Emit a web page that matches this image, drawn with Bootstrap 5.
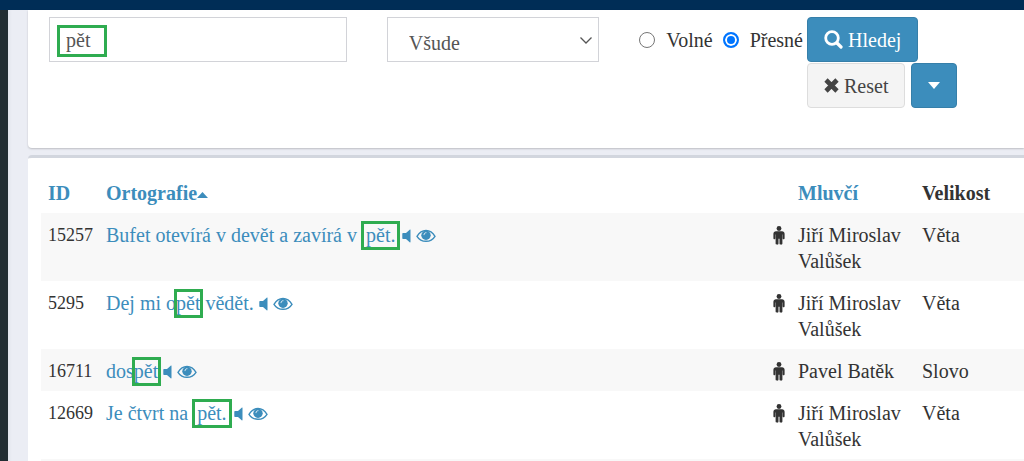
<!DOCTYPE html>
<html lang="cs">
<head>
<meta charset="utf-8">
<meta name="viewport" content="width=device-width, initial-scale=1">
<title>Hledání</title>
<link href="https://cdn.jsdelivr.net/npm/bootstrap@5.3.0/dist/css/bootstrap.min.css" rel="stylesheet">
<script src="https://cdn.jsdelivr.net/npm/bootstrap@5.3.0/dist/js/bootstrap.bundle.min.js" defer></script>
<style>
  :root { --blue: #3c8dbc; --green: #2fac50; }
  body { font: 20px/26px "Liberation Serif", serif; color: #333; background: #ebedf4; }
  .topbar { height: 10px; background: #002d56; }
  .rail { width: 8px; background: #222d32; }
  .shade { width: 20px; background: linear-gradient(90deg, #e2e5ec, #ebedf4 4px); }
  a { color: var(--blue); text-decoration: none; }
  svg { fill: currentColor; }
  .panel { background: #fff; }
  .search-panel { border-radius: 0 0 0 4px; box-shadow: 0 1px 2px rgba(0,0,0,.2); padding: 7px 64px 40px 21px; }
  .result-panel { margin-top: 7px; border-top: 3px solid #d2d6de; border-radius: 4px 0 0 0; padding: 15px 0 0 13px; }
  .search-grid { display: grid; grid-template-columns: 7fr 5fr auto; column-gap: 40px; align-items: start; }
  .form-control, .form-select { height: 45px; border: 1px solid #d2d3d8; border-radius: 0; color: #555; font-size: 20px; line-height: 26px; }
  .form-control { padding: 10px 16px 8px; }
  .form-select { padding: 12px 22px 5px 21px; background-size: 18px; background-position: right 3px center;
    background-image: url("data:image/svg+xml,%3csvg xmlns='http://www.w3.org/2000/svg' viewBox='0 0 18 18'%3e%3cpath fill='none' stroke='%23555' stroke-width='1.3' d='M3.500 6.500l5.500 5.500 5.500-5.500'/%3e%3c/svg%3e"); }
  .query-frame { position: absolute; left: 8px; top: 8px; width: 50px; height: 32px; border: 3px solid var(--green); pointer-events: none; }
  .form-check-input[type=radio] { width: 16px; height: 16px; margin: 0 11px 0 0; border: 1px solid #767676; }
  .form-check-input[type=radio]:checked { border: 2px solid #0075ff; background: #0075ff; box-shadow: inset 0 0 0 2px #fff; }
  .choices { height: 45px; padding-right: 4px; }
  .choices label:first-of-type { margin-right: 10px; }
  .actions { width: 153px; column-gap: 6px; row-gap: 1px; }
  .btn { height: 45px; border-radius: 4px; font-size: 20px; line-height: 26px; padding: 8px 16px; display: inline-flex; align-items: center; gap: 5px; }
  .btn-find, .btn-find:hover { background: var(--blue); border-color: #367fa9; color: #fff; }
  .btn-reset, .btn-reset:hover { background: #f4f4f4; border-color: #ddd; color: #444; }
  .table { --bs-table-striped-bg: #f8f8f8; --bs-table-color: #333; --bs-table-striped-color: #333; --bs-table-bg: #fff; table-layout: fixed; margin: 0; }
  .table > :not(caption) > * > * { padding: 9px 8px 7px; border: 0; }
  .table > thead > tr > th { padding: 7px 8px; white-space: nowrap; }
  .c-id { width: 57px; } .c-sex { width: 26px; } .c-who { width: 124px; } .c-size { width: 110px; }
  .table > tbody > tr > .num, .table > thead > tr > .num { padding-left: 7px; padding-right: 0; }
  .table td.num { font-size: 18px; }
  .table td.sex { padding-right: 0; }
  .sex svg { display: block; margin: 4px 0 0 1px; }
  .row-icon { vertical-align: -1px; }
  .hit { position: relative; margin: 0 2px 0 4px; }
  .hit::after { content: ""; position: absolute; inset: -3px -5px -4px; border: 3px solid var(--green); pointer-events: none; }
  .hit.inner { margin: 0; }
  .hit.inner::after { inset: -3px -3px -4px -2px; }
</style>
</head>
<body class="vh-100 overflow-hidden d-flex flex-column">
<header class="topbar flex-shrink-0"></header>
<svg width="0" height="0" class="position-absolute">
  <symbol id="i-eye" viewBox="0 0 20 14"><path fill="none" stroke="currentColor" stroke-width="1.400" d="M1 7.300C3 4 6.200 1.500 10 1.500s7 2.500 9 5.800c-2 3.200-5.200 5-9 5S3 10.500 1 7.300z"/><circle cx="10" cy="6.200" r="4.700"/><path fill="none" stroke="#fff" stroke-width=".8" stroke-linecap="round" d="M8 5.700c0-1.200.8-2 2-2"/></symbol>
  <symbol id="i-vol" viewBox="0 0 9 14"><path d="M8.500 1v12c0 .5-.5.600-.8.300L4 10H1c-.4 0-.7-.3-.7-.7V4.700C.300 4.300.600 4 1 4h3L7.700.700c.3-.3.800-.2.800.3z"/></symbol>
  <symbol id="i-man" viewBox="0 0 12 19"><circle cx="6" cy="2.500" r="2.400"/><path d="M3 5.300h6c1.500 0 2.600 1 2.600 2.400v4.500c0 1.300-1.900 1.300-1.900 0V8.500h-.3v9c0 1.600-2.900 1.600-2.900 0v-4.800h-1v4.800c0 1.600-2.900 1.600-2.900 0v-9h-.3v3.700c0 1.300-1.900 1.300-1.900 0V7.700C.400 6.300 1.500 5.300 3 5.300z"/></symbol>
</svg>
<div class="d-flex flex-grow-1">
  <aside class="rail flex-shrink-0"></aside>
  <div class="shade flex-shrink-0"></div>
  <main class="flex-grow-1">
    <section class="panel search-panel">
      <form class="search-grid" onsubmit="return false">
        <div class="position-relative">
          <input class="form-control" type="text" value="pět" aria-label="Hledaný text">
          <span class="query-frame"></span>
        </div>
        <select class="form-select" aria-label="Kde hledat"><option>Všude</option></select>
        <div class="d-flex">
          <div class="choices d-flex align-items-center">
            <input class="form-check-input" type="radio" name="mode" id="mode-free"><label for="mode-free">Volné</label>
            <input class="form-check-input" type="radio" name="mode" id="mode-exact" checked><label for="mode-exact">Přesné</label>
          </div>
          <div class="actions d-flex flex-wrap">
            <button class="btn btn-find" type="submit"><svg width="19" height="19" viewBox="0 0 19 19"><path fill="none" stroke="currentColor" stroke-width="2.800" d="M14.300 8A6.300 6.300 0 1 1 1.700 8a6.300 6.300 0 0 1 12.600 0z"/><path stroke="currentColor" stroke-width="3.200" stroke-linecap="round" d="M13 13l4 4"/></svg>Hledej</button>
            <button class="btn btn-reset" type="reset"><svg width="15" height="15" viewBox="0 0 15 15"><path stroke="currentColor" stroke-width="4.600" d="M2 2l11 11M13 2L2 13"/></svg>Reset</button>
            <button class="btn btn-find" type="button" aria-label="Další"><svg width="12" height="7" viewBox="0 0 12 7"><path d="M0 0h12L6 7z"/></svg></button>
          </div>
        </div>
      </form>
    </section>
    <section class="panel result-panel">
      <table class="table table-striped">
        <colgroup><col class="c-id"><col><col class="c-sex"><col class="c-who"><col class="c-size"></colgroup>
        <thead><tr><th class="num"><a href="#">ID</a></th><th><a href="#">Ortografie<svg class="align-middle" width="11" height="6" viewBox="0 0 11 6"><path d="M0 6h11L5.500 0z"/></svg></a></th><th></th><th><a href="#">Mluvčí</a></th><th>Velikost</th></tr></thead>
        <tbody>
          <tr><td class="num">15257</td><td><a href="#">Bufet otevírá v devět a zavírá v <span class="hit">pět.</span></a> <a href="#" aria-label="Přehrát"><svg class="row-icon" width="9" height="14"><use href="#i-vol"/></svg></a> <a href="#" aria-label="Zobrazit"><svg class="row-icon" width="20" height="14"><use href="#i-eye"/></svg></a></td><td class="sex"><svg width="12" height="19"><use href="#i-man"/></svg></td><td>Jiří Miroslav Valůšek</td><td>Věta</td></tr>
          <tr><td class="num">5295</td><td><a href="#">Dej mi o<span class="hit inner">pět</span> vědět.</a> <a href="#" aria-label="Přehrát"><svg class="row-icon" width="9" height="14"><use href="#i-vol"/></svg></a> <a href="#" aria-label="Zobrazit"><svg class="row-icon" width="20" height="14"><use href="#i-eye"/></svg></a></td><td class="sex"><svg width="12" height="19"><use href="#i-man"/></svg></td><td>Jiří Miroslav Valůšek</td><td>Věta</td></tr>
          <tr><td class="num">16711</td><td><a href="#">dos<span class="hit inner">pět</span></a> <a href="#" aria-label="Přehrát"><svg class="row-icon" width="9" height="14"><use href="#i-vol"/></svg></a> <a href="#" aria-label="Zobrazit"><svg class="row-icon" width="20" height="14"><use href="#i-eye"/></svg></a></td><td class="sex"><svg width="12" height="19"><use href="#i-man"/></svg></td><td>Pavel Batěk</td><td>Slovo</td></tr>
          <tr><td class="num">12669</td><td><a href="#">Je čtvrt na <span class="hit">pět.</span></a> <a href="#" aria-label="Přehrát"><svg class="row-icon" width="9" height="14"><use href="#i-vol"/></svg></a> <a href="#" aria-label="Zobrazit"><svg class="row-icon" width="20" height="14"><use href="#i-eye"/></svg></a></td><td class="sex"><svg width="12" height="19"><use href="#i-man"/></svg></td><td>Jiří Miroslav Valůšek</td><td>Věta</td></tr>
          <tr><td colspan="5"></td></tr>
        </tbody>
      </table>
    </section>
  </main>
</div>
</body>
</html>
